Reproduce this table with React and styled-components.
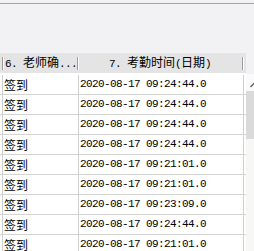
import React from 'react';
import styled, { createGlobalStyle } from 'styled-components';

const GlobalStyle = createGlobalStyle`
  body {
    margin: 0;
    background: #f2f2f4;
    font-family: "Noto Sans CJK SC", "Liberation Sans", sans-serif;
  }
`;

const rows = [
  '09:24:44.0',
  '09:24:44.0',
  '09:24:44.0',
  '09:24:44.0',
  '09:21:01.0',
  '09:21:01.0',
  '09:23:09.0',
  '09:24:44.0',
  '09:21:01.0',
];

const App = () => (
  <>
    <GlobalStyle />
    <Page>
      <TopLine />
      <GridArea>
        <Table>
          <Header>
            <HeadLead />
            <Sep />
            <HeadCell width={74}>
              <Mono>6. </Mono>老师确<Mono>...</Mono>
            </HeadCell>
            <Sep />
            <HeadCell width={164} center>
              <Mono>7. </Mono>考勤时间<Mono>(</Mono>日期<Mono>)</Mono>
            </HeadCell>
            <Sep />
          </Header>
          <Body>
            {rows.map((time, i) => (
              <Row key={i}>
                <Lead />
                <Cell width={76}>签到</Cell>
                <DateCell width={165}>2020-08-17 {time}</DateCell>
                <Cell width={3} />
              </Row>
            ))}
          </Body>
        </Table>
        <Scrollbar>
          <ScrollTop />
          <ArrowButton>
            <svg width="17" height="16" viewBox="0 0 17 16">
              <path d="M4.5 10 L8.5 6 L12.5 10" fill="none" stroke="#606060" strokeWidth="1.3" />
            </svg>
          </ArrowButton>
          <Thumb />
          <Track />
        </Scrollbar>
      </GridArea>
    </Page>
  </>
);

const Page = styled.div`
  width: 254px;
  height: 251px;
  overflow: hidden;
`;

const TopLine = styled.div`
  margin-top: 3px;
  height: 0;
  border-top: 1px solid #a2a2a2;
  margin-bottom: 49px;
`;

const GridArea = styled.div`
  display: flex;
  height: 198px;
`;

const Table = styled.div`
  width: 246px;
  display: flex;
  flex-direction: column;
`;

const Header = styled.div`
  display: flex;
  align-items: center;
  height: 20px;
  background: #e4e4e4;
  flex-shrink: 0;
`;

const HeadLead = styled.div`
  width: 2px;
`;

const Sep = styled.div`
  width: 1px;
  height: 13px;
  background: #9c9c9c;
  box-shadow: 1px 0 0 #ffffff;
`;

const HeadCell = styled.div`
  width: ${p => p.width}px;
  padding-left: ${p => (p.center ? 0 : 2)}px;
  box-sizing: border-box;
  text-align: ${p => (p.center ? 'center' : 'left')};
  font-size: 12px;
  line-height: 20px;
  color: #000;
  white-space: nowrap;
  overflow: hidden;
`;

const Mono = styled.span`
  font-family: "Liberation Mono", monospace;
  font-size: 11px;
  letter-spacing: -0.6px;
  white-space: pre;
`;

const Body = styled.div`
  flex: 1;
  background: #ffffff;
  padding-top: 2px;
`;

const Row = styled.div`
  display: flex;
  height: 20px;
  box-sizing: border-box;
  border-bottom: 1px solid #d3d3d3;
`;

const Lead = styled.div`
  width: 2px;
`;

const Cell = styled.div`
  width: ${p => p.width}px;
  box-sizing: border-box;
  border-left: 1px solid #d0d0d0;
  padding-left: 1px;
  font-size: 12px;
  line-height: 19px;
  color: #000;
  white-space: nowrap;
  overflow: hidden;
`;

const DateCell = styled(Cell)`
  font-family: "Liberation Mono", monospace;
  font-size: 11px;
  letter-spacing: -0.6px;
`;

const Scrollbar = styled.div`
  width: 8px;
  display: flex;
  flex-direction: column;
  overflow: hidden;
`;

const ScrollTop = styled.div`
  height: 21px;
  background: #f2f2f4;
  flex-shrink: 0;
`;

const ArrowButton = styled.div`
  height: 17px;
  width: 17px;
  background: #fafafa;
  flex-shrink: 0;
`;

const Thumb = styled.div`
  height: 48px;
  background: #dadada;
  flex-shrink: 0;
`;

const Track = styled.div`
  flex: 1;
  background: #f7f7f5;
`;

export default App;
